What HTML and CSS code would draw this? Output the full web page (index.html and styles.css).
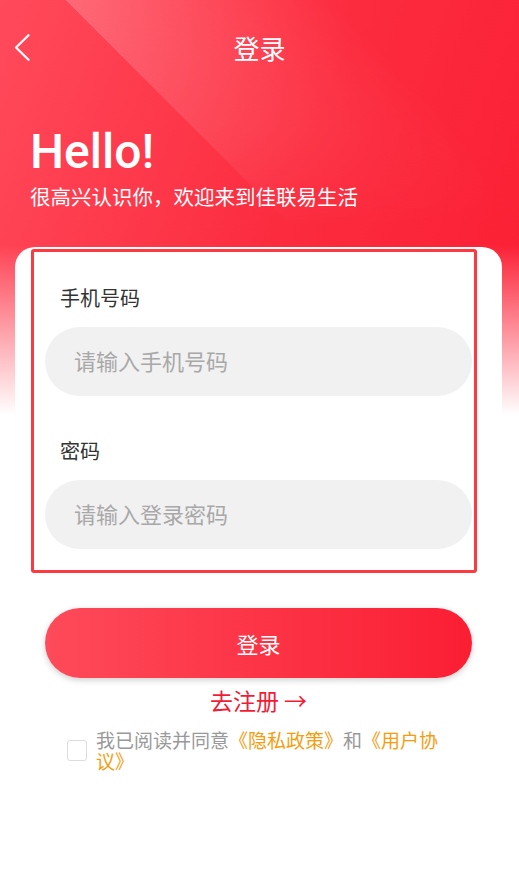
FILE: index.html
```html
<!DOCTYPE html>
<html>
	<head>
		<meta charset="utf-8" />
		<title>登录</title>
		<link rel="stylesheet" href="styles.css">
	</head>
	<body>
		<div class="screen">
			<div class="hero">
				<div class="nav">
					<a class="nav_back">
						<svg width="16" height="27" viewBox="0 0 16 27">
							<polyline points="14.5,1.2 2,13.5 14.5,25.8" fill="none" stroke="#fff" stroke-width="2.2" stroke-linecap="round" stroke-linejoin="round" />
						</svg>
					</a>
					<span class="nav_title">登录</span>
					<span></span>
				</div>
				<div class="greeting">
					<h1 class="greeting_hello">Hello!</h1>
					<p class="greeting_sub">很高兴认识你，欢迎来到佳联易生活</p>
				</div>
			</div>

			<div class="card">
				<form class="login_form">
					<label class="field_label" for="phone">手机号码</label>
					<input class="field_input" id="phone" type="text" placeholder="请输入手机号码" />
					<label class="field_label field_label_next" for="password">密码</label>
					<input class="field_input" id="password" type="password" placeholder="请输入登录密码" />
				</form>
			</div>

			<div class="actions">
				<button class="login_button" type="button">登录</button>
				<a class="register_link">去注册 →</a>
			</div>

			<div class="agreement">
				<span class="agreement_check"></span>
				<p class="agreement_text">我已阅读并同意<a class="agreement_link">《隐私政策》</a>和<a class="agreement_link"><span>《用户协</span><span>议》</span></a></p>
			</div>
		</div>
	</body>
</html>
```

FILE: styles.css
```css
body {
	margin: 0;
	background-color: #fff;
	font-family: "Noto Sans CJK SC", "Noto Sans", sans-serif;
}

.screen {
	width: 519px;
	min-height: 894px;
	background:
		linear-gradient(to bottom, rgba(255, 255, 255, 0) 245px, #fff 415px) no-repeat,
		linear-gradient(110deg, #ff4a5b 0%, #fc2b3e 55%, #fb1e33 100%) no-repeat;
	background-size: 100% 416px, 100% 416px;
	background-color: #fff;
}

.hero {
	position: relative;
}

/* 斜向高光 */
.hero::before {
	content: "";
	position: absolute;
	left: 0;
	top: 0;
	width: 100%;
	height: 230px;
	background: linear-gradient(45deg, rgba(255, 255, 255, 0) 209px, rgba(255, 255, 255, 0.2) 209px, rgba(255, 255, 255, 0) 400px);
	-webkit-mask-image: linear-gradient(to bottom, #000 0%, rgba(0, 0, 0, 0.5) 55%, transparent 100%);
	mask-image: linear-gradient(to bottom, #000 0%, rgba(0, 0, 0, 0.5) 55%, transparent 100%);
}

.nav {
	position: relative;
	height: 96px;
	display: grid;
	grid-template-columns: 1fr auto 1fr;
	align-items: center;
}

.nav_back {
	display: flex;
	padding-left: 14px;
	margin-top: -1px;
}

.nav_title {
	color: #fff;
	font-size: 26px;
	line-height: 36px;
}

.greeting {
	position: relative;
	padding: 32px 0 0 30px;
	color: #fff;
}

.greeting_hello {
	margin: 0;
	font-family: Roboto, "Noto Sans", sans-serif;
	font-size: 48px;
	line-height: 48px;
	font-weight: 500;
}

.greeting_sub {
	margin: 6px 0 0;
	font-size: 20.5px;
	line-height: 29px;
}

.card {
	margin: 36px 17px 0 15px;
	background-color: #fff;
	border-radius: 20px;
	padding: 2px 0 0 16px;
}

.login_form {
	width: 429px;
	border: 3px solid #fc3a3f;
	border-radius: 3px;
	padding: 32px 0 21px 11px;
	display: flex;
	flex-direction: column;
	align-items: flex-start;
}

.field_label {
	font-size: 20px;
	line-height: 28px;
	color: #333;
	padding-left: 15px;
	margin-bottom: 15px;
}

.field_label_next {
	margin-top: 41px;
}

.field_input {
	box-sizing: border-box;
	width: 427px;
	height: 69px;
	border: none;
	outline: none;
	border-radius: 35px;
	background-color: #f1f1f1;
	padding: 0 0 3px 29px;
	font-family: inherit;
	font-size: 22px;
	color: #333;
}

.field_input::placeholder {
	color: #a8a8a8;
}

.actions {
	display: flex;
	flex-direction: column;
	align-items: center;
	padding: 35px 47px 0 45px;
}

.login_button {
	width: 427px;
	height: 70px;
	border: none;
	border-radius: 35px;
	background: linear-gradient(to right, #fe4a5a, #fb1e33);
	box-shadow: 0 2px 6px rgba(0, 0, 0, 0.2);
	color: #fff;
	font-family: inherit;
	font-size: 22px;
}

.register_link {
	margin-top: 7px;
	font-size: 23px;
	line-height: 30px;
	color: #f21b36;
}

.agreement {
	display: flex;
	align-items: center;
	gap: 9px;
	padding: 14px 67px 0 67px;
}

.agreement_check {
	flex: none;
	box-sizing: border-box;
	width: 20px;
	height: 21px;
	border: 1px solid #ddd;
	border-radius: 3px;
	background-color: #fff;
}

.agreement_text {
	margin: 0;
	font-size: 19px;
	line-height: 21px;
	color: #999;
}

.agreement_link {
	color: #f59d0e;
}
```
